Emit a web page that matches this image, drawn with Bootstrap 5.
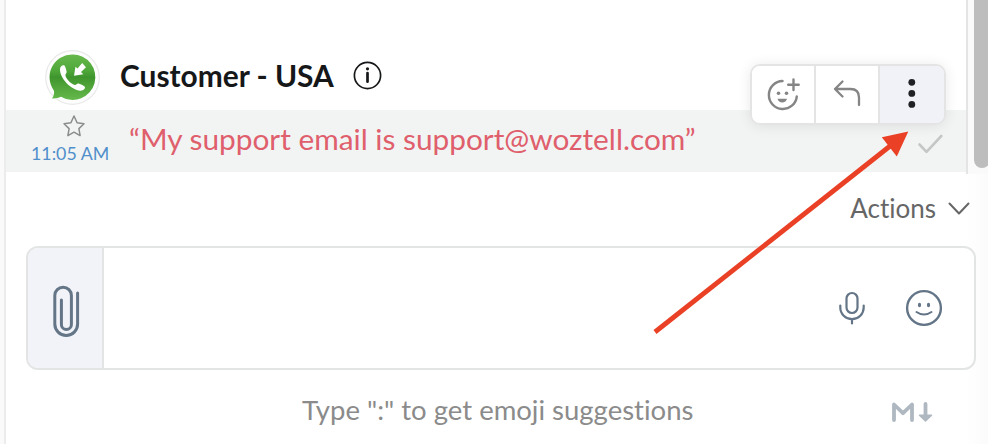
<!DOCTYPE html>
<html lang="en">
<head>
<meta charset="utf-8">
<meta name="viewport" content="width=device-width, initial-scale=1">
<title>Conversation</title>
<link href="https://cdn.jsdelivr.net/npm/bootstrap@5.3.0/dist/css/bootstrap.min.css" rel="stylesheet">
<style>
body{font-family:Lato,sans-serif;background:#fff;color:#151719;font-variant-ligatures:none}
svg{display:block;flex:none;overflow:visible}
.shell{width:988px;height:444px}
.rail{width:6px;background:#fafafa;border-right:2px solid #ececec}
.thread{height:174px}
.messages{width:960px}
.track{width:22px;background:#fafafa;border-left:2px solid #e4e4e4}
.thumb{width:16px;height:168px;margin-left:6px;background:#bdbdbd;border-radius:0 0 9px 9px}
.sender{height:110px;padding:50px 0 0 39px}
.avatar{width:55px;height:55px}
.who{font-size:29.900px;font-weight:700;line-height:36px;margin:7px 0 0 20px;width:213px;white-space:nowrap}
.info{margin:10.5px 0 0 20px}
.bubble{height:61.5px;background:#f2f4f4}
.meta{width:123px;padding-left:25px}
.star{margin:5px 0 0 32px}
.time{font-size:17.800px;line-height:22px;color:#518fcb;margin-top:5px;white-space:nowrap}
.message-text{font-size:29.800px;line-height:36px;color:#df5f6c;margin-top:11px;white-space:nowrap}
.tick{margin:24px 23px 0 auto}
.tools{left:750px;top:64px;width:196px;height:61px;border:2px solid #e4e4e4;border-radius:10px;box-shadow:0 1px 14px rgba(0,0,0,.09)}
.tool{width:64px;border-right:2px solid #e4e4e4;background:#fff}
.tool.active{border:0;background:#f1f2f8}
.actions{height:72px;padding:16px 18px 0 0;font-size:26px;line-height:36px;color:#666}
.chevron{margin:12px 0 0 12px}
.below{background:linear-gradient(90deg,#fff 960px,#fafafb 988px)}
.composer{height:124px;margin:0 12px 0 20px;border:2px solid #e3e4e4;border-radius:12px;background:#fff}
.attach{width:76px;padding-left:2px;background:#f1f3f8;border-right:2px solid #e3e4e4}
.inputs{gap:41px;padding-right:32px}
.hint{height:74px;font-size:27.500px;line-height:36px;color:#8b8b8b;padding:22px 55px 0 296px}
.markdown{margin-top:10px}
.pointer{left:0;top:0;z-index:3;pointer-events:none}
</style>
</head>
<body>
<div class="shell d-flex position-relative overflow-hidden">
  <div class="rail flex-shrink-0"></div>
  <main class="flex-grow-1 below">
    <section class="thread d-flex">
      <div class="messages bg-white">
        <header class="sender d-flex align-items-start">
          <svg class="avatar" viewBox="0 0 55 55">
            <defs><linearGradient id="leaf" x2="0" y2="1"><stop offset="0" stop-color="#67b84b"/><stop offset=".35" stop-color="#50a83a"/><stop offset=".5" stop-color="#3f952d"/><stop offset="1" stop-color="#66b94b"/></linearGradient></defs>
            <circle cx="27.5" cy="27.5" r="26.8" fill="#fdfdfd" stroke="#e9e9e9" stroke-width="1.2"/>
            <path d="M27.5 4.500a22.700 22.700 0 1 1-11.500 42.200C13.500 48 10.500 48.500 7 48.400 8.800 46 9.400 43.500 9 40.700A22.700 22.700 0 0 1 27.500 4.500z" fill="url(#leaf)"/>
            <path d="M15 19.500c0-2.600 1.700-4.500 4-4.200 1.200.2 2 3.900 2.600 6.100.4 1.500-1.300 2.400-1.200 3.600.3 3.500 5.700 9.300 9.500 9.900 1.200.2 2.300-1.800 3.800-1.300 2.200.7 5.500 2.200 6.100 3.200 1 1.800-1.700 4-4.300 3.900C26 40 15 28.300 15 19.500z" fill="#fff"/>
            <path d="M29 25.700l1.500-8.900 2 1.600 4.700-5.400 3.800 4.300-5 4.600 2.300 2.400z" fill="#fff"/>
          </svg>
          <div class="who">Customer - USA</div>
          <svg class="info" width="29" height="29" viewBox="0 0 29 29"><circle cx="14.500" cy="14.500" r="13.100" fill="none" stroke="#151719" stroke-width="1.700"/><path d="M14.500 12v8.700" stroke="#151719" stroke-width="2.700" stroke-linecap="round"/><circle cx="14.500" cy="7.800" r="1.600" fill="#151719"/></svg>
        </header>
        <article class="bubble d-flex align-items-start">
          <div class="meta">
            <svg class="star" width="22" height="22" viewBox="0 0 22 22"><path d="M11 1l3.100 6.700 6.900 1-5.100 4.900 1.200 7-6.100-3.400-6.100 3.400 1.200-7L1 8.700l6.900-1z" fill="none" stroke="#8b8d8d" stroke-width="1.500" stroke-linejoin="round"/></svg>
            <div class="time">11:05 AM</div>
          </div>
          <div class="message-text">“My support email is support@woztell.com”</div>
          <svg class="tick" width="25" height="20" viewBox="0 0 25 20"><path d="M1.500 10.500l7 7.300L23.300 2" fill="none" stroke="#c5c6c6" stroke-width="2.600" stroke-linecap="round" stroke-linejoin="round"/></svg>
        </article>
      </div>
      <div class="track overflow-hidden"><div class="thumb"></div></div>
    </section>
    <div class="actions d-flex justify-content-end">
      <span>Actions</span>
      <svg class="chevron" width="22" height="14" viewBox="0 0 22 14"><path d="M1.500 1.500l9.500 10 9.500-10" fill="none" stroke="#666" stroke-width="2" stroke-linecap="round" stroke-linejoin="round"/></svg>
    </div>
    <section class="composer d-flex overflow-hidden">
      <div class="attach d-flex align-items-center justify-content-center">
        <svg width="28" height="52" viewBox="52 282 28 52"><path d="M77.600 293.500V324.600a11.400 11.400 0 0 1-22.800 0V296a8.300 8.300 0 0 1 16.600 0V325a5 5 0 0 1-10 0V300.500" transform="translate(0 -.5)" fill="none" stroke="#647587" stroke-width="3" stroke-linecap="round"/></svg>
      </div>
      <div class="inputs flex-grow-1 d-flex align-items-center justify-content-end">
        <svg width="26" height="33" viewBox="0 0 26 33"><g fill="none" stroke="#647587" stroke-width="2.200" stroke-linecap="round"><rect x="7.500" y="1" width="11" height="20" rx="5.500"/><path d="M1.300 13.500v2a11.700 11.700 0 0 0 23.400 0v-2M13 27.200V31.500"/></g></svg>
        <svg width="36" height="36" viewBox="0 0 36 36"><circle cx="18" cy="18" r="16.900" fill="none" stroke="#647587" stroke-width="2.400"/><ellipse cx="13.500" cy="15" rx="1.600" ry="2.200" fill="#647587"/><ellipse cx="22.500" cy="15" rx="1.600" ry="2.200" fill="#647587"/><path d="M10.500 22q7.500 5.200 15 0" fill="none" stroke="#647587" stroke-width="2" stroke-linecap="round"/></svg>
      </div>
    </section>
    <footer class="hint d-flex justify-content-between">
      <span class="text-nowrap">Type ":" to get emoji suggestions</span>
      <svg class="markdown" width="41" height="21" viewBox="0 0 41 21"><path d="M2 18V2.500l9 8.700 9-8.700V18" fill="none" stroke="#afb8c0" stroke-width="3.800" stroke-linecap="round" stroke-linejoin="round"/><path d="M33.500 2v12" stroke="#afb8c0" stroke-width="3.800" stroke-linecap="round"/><path d="M27.500 13.300h12l-6 5.700z" fill="#afb8c0" stroke="#afb8c0" stroke-width="1.500" stroke-linejoin="round"/></svg>
    </footer>
  </main>
  <div class="tools position-absolute d-flex overflow-hidden">
    <div class="tool"><svg width="62" height="57" viewBox="752 66 62 57"><g fill="none" stroke="#858585" stroke-width="2.400" stroke-linecap="round"><path d="M782.500 81A14 14 0 1 0 796.800 96.500M793.500 79.500v10.500M788.200 84.800h10.500"/></g><circle cx="778.500" cy="93.200" r="1.800" fill="#858585"/><circle cx="786.500" cy="93.200" r="1.800" fill="#858585"/><path d="M777.500 98.800h9.500c-.8 4.900-8.700 4.900-9.500 0z" fill="#858585"/></svg></div>
    <div class="tool"><svg width="62" height="57" viewBox="816 66 62 57"><path d="M842.500 81.500L835 89l7.500 7.500M835 89h15.500q8.500 0 8.500 8.500V105" fill="none" stroke="#858585" stroke-width="2.300" stroke-linecap="round" stroke-linejoin="round"/></svg></div>
    <div class="tool active"><svg width="64" height="57" viewBox="880 66 64 57" fill="#202124"><circle cx="911.800" cy="82.300" r="3.400"/><circle cx="911.800" cy="93.400" r="3.400"/><circle cx="911.800" cy="104.400" r="3.400"/></svg></div>
  </div>
  <svg class="pointer position-absolute" width="988" height="444" viewBox="0 0 988 444"><path d="M655 332L892 144.500" stroke="#ea4025" stroke-width="4.800"/><path d="M908.300 131.500l-26.500 5.800 15 19.200z" fill="#ea4025"/></svg>
</div>
<script src="https://cdn.jsdelivr.net/npm/bootstrap@5.3.0/dist/js/bootstrap.bundle.min.js"></script>
</body>
</html>
